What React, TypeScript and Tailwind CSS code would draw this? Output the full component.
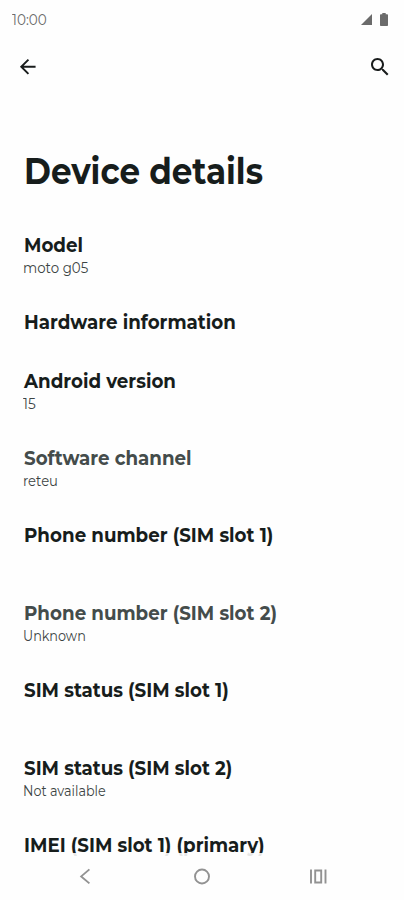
type Row = { title: string; sub?: string; subScale?: string; muted?: boolean };

const rows: Row[] = [
  { title: "Model", sub: "moto g05", subScale: "scale-x-[0.955]" },
  { title: "Hardware information" },
  { title: "Android version", sub: "15", subScale: "scale-x-[0.98]" },
  { title: "Software channel", sub: "reteu", subScale: "scale-x-[0.94]", muted: true },
  { title: "Phone number (SIM slot 1)", sub: "" },
  { title: "Phone number (SIM slot 2)", sub: "Unknown", subScale: "scale-x-[0.915]", muted: true },
  { title: "SIM status (SIM slot 1)", sub: "" },
  { title: "SIM status (SIM slot 2)", sub: "Not available", subScale: "scale-x-[0.912]" },
  { title: "IMEI (SIM slot 1) (primary)", sub: "" },
];

function StatusBar() {
  return (
    <div className="flex h-10 shrink-0 items-center justify-between pl-[11.5px] pr-4 text-[#6b6b6b]">
      <span className="origin-left scale-x-[0.97] text-[14px] leading-5">10:00</span>
      <div className="flex items-center gap-2 pb-px">
        <svg width="11" height="11" viewBox="0 0 11 11" fill="currentColor">
          <path d="M11 0V11H0Z" />
        </svg>
        <svg width="8" height="13" viewBox="0 0 8 13" fill="currentColor">
          <path d="M2.3 0h3.4v1.2h1.5q.8 0 .8.8v10.2q0 .8-.8.8H.8q-.8 0-.8-.8V2q0-.8.8-.8h1.5z" />
        </svg>
      </div>
    </div>
  );
}

function Toolbar() {
  return (
    <div className="flex h-[53px] shrink-0 items-center justify-between pl-[16px] pr-3 text-[#191c1c]">
      <svg width="23.5" height="23.5" viewBox="0 0 24 24" fill="currentColor">
        <path d="M20 11H7.83l5.59-5.59L12 4l-8 8 8 8 1.41-1.41L7.83 13H20v-2z" />
      </svg>
      <svg width="24" height="24" viewBox="0 0 24 24" fill="currentColor">
        <path d="M15.5 14h-.79l-.28-.27C15.41 12.59 16 11.11 16 9.5 16 5.91 13.09 3 9.5 3S3 5.91 3 9.5 5.91 16 9.5 16c1.61 0 3.09-.59 4.23-1.57l.27.28v.79l5 4.99L20.49 19l-4.99-5zm-6 0C7.01 14 5 11.99 5 9.5S7.01 5 9.5 5 14 7.01 14 9.5 11.99 14 9.5 14z" />
      </svg>
    </div>
  );
}

function NavBar() {
  return (
    <div className="relative -mt-1 flex h-[47.5px] w-full shrink-0 items-start justify-between bg-[#fefefe]/90 pl-[79px] pr-[77px] pt-[15.5px] text-[#929292]">
      <svg width="12" height="17" viewBox="0 0 12 17" fill="none" stroke="currentColor" strokeWidth="1.9">
        <path d="M10.4 1.4L2.2 8.4l8.2 7" />
      </svg>
      <svg className="translate-x-[1.5px]" width="17" height="17" viewBox="0 0 17 17" fill="none" stroke="currentColor" strokeWidth="1.9">
        <circle cx="8.5" cy="8.5" r="7" />
      </svg>
      <svg width="17" height="17" viewBox="0 0 17 17" fill="none" stroke="currentColor" strokeWidth="1.9">
        <path d="M1 1.5v14M15.5 1.5v14M5.2 2.5h6v12h-6z" />
      </svg>
    </div>
  );
}

export default function App() {
  return (
    <div className="flex h-[900px] w-[404px] flex-col overflow-hidden bg-[#fefefe] font-['Montserrat','Inter',sans-serif]">
      <div className="flex h-[856.5px] shrink-0 flex-col overflow-hidden">
        <StatusBar />
        <Toolbar />
        <h1 className="mt-[56px] h-[66.8px] w-[380px] shrink-0 origin-left scale-x-[0.905] pl-[26.5px] text-[36px] font-bold leading-[44px] text-[#171d1c]">
          Device details
        </h1>
        <ul className="flex shrink-0 flex-col pl-[23.5px]">
          {rows.map((r) => (
            <li key={r.title} className="py-[17.2px]">
              <div
                className={`h-6 origin-left scale-x-[0.912] whitespace-nowrap text-[20px] font-bold leading-6 ${r.muted ? "text-[#444c4b]" : "text-[#171d1c]"}`}
              >
                {r.title}
              </div>
              {r.sub !== undefined && (
                <div className={`-ml-[0.5px] h-[19px] origin-left whitespace-nowrap text-[14px] leading-[22px] text-[#3c4443] ${r.subScale ?? ""}`}>
                  {r.sub}
                </div>
              )}
            </li>
          ))}
        </ul>
      </div>
      <NavBar />
    </div>
  );
}
